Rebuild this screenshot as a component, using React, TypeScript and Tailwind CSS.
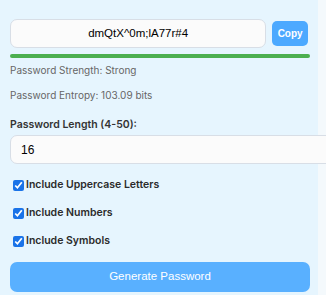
export default function App() {
  return (
    <div className="h-[295px] w-[326px] overflow-hidden bg-[#f4f9fc] font-['Inter',sans-serif]">
      <div className="h-[295px] w-[318px] bg-[#e6f5fe] px-[10px] pt-[19px]">
        <div className="flex items-center">
          <div className="flex h-[29px] w-[258px] items-center justify-center rounded-[7px] border border-[#d8dee6] bg-[#fbfbfb] font-['Liberation_Sans',Arial,sans-serif] text-[11.5px] text-black">
            dmQtX^0m;lA77r#4
          </div>
          <button className="ml-[6px] h-[25px] w-[36px] rounded-[5px] bg-[#4ca9ff] font-['Liberation_Sans',Arial,sans-serif] text-[10px] font-bold text-white">
            Copy
          </button>
        </div>
        <div className="mt-[6px] h-[4px] w-[300px] rounded-full bg-[#4caf50]" />
        <p className="mt-[6px] text-[10px] leading-[13px] text-[#666]">Password Strength: Strong</p>
        <p className="mt-[12px] text-[10px] leading-[13px] text-[#666]">Password Entropy: 103.09 bits</p>
        <p className="mt-[16px] text-[10.5px] font-semibold leading-[14px] text-[#333]">Password Length (4-50):</p>
        <div className="mt-[3px] flex h-[29px] w-[330px] items-center rounded-[7px] border border-[#d8dee6] bg-[#fbfbfb] pl-[10px] font-['Liberation_Sans',Arial,sans-serif] text-[12px] text-black">
          16
        </div>
        <div className="mt-[14px] flex flex-col gap-[14px]">
          {["Include Uppercase Letters", "Include Numbers", "Include Symbols"].map((label) => (
            <label key={label} className="flex h-[14px] items-center pl-[3px] text-[10.5px] font-semibold text-[#2b2b2b]">
              <input type="checkbox" defaultChecked className="mr-[2px] h-[11px] w-[11px] accent-[#1a73e8]" />
              {label}
            </label>
          ))}
        </div>
        <button className="mt-[14px] h-[30px] w-[300px] rounded-[7px] bg-[#59b0ff] font-['Liberation_Sans',Arial,sans-serif] text-[11.5px] text-white">
          Generate Password
        </button>
      </div>
    </div>
  );
}
